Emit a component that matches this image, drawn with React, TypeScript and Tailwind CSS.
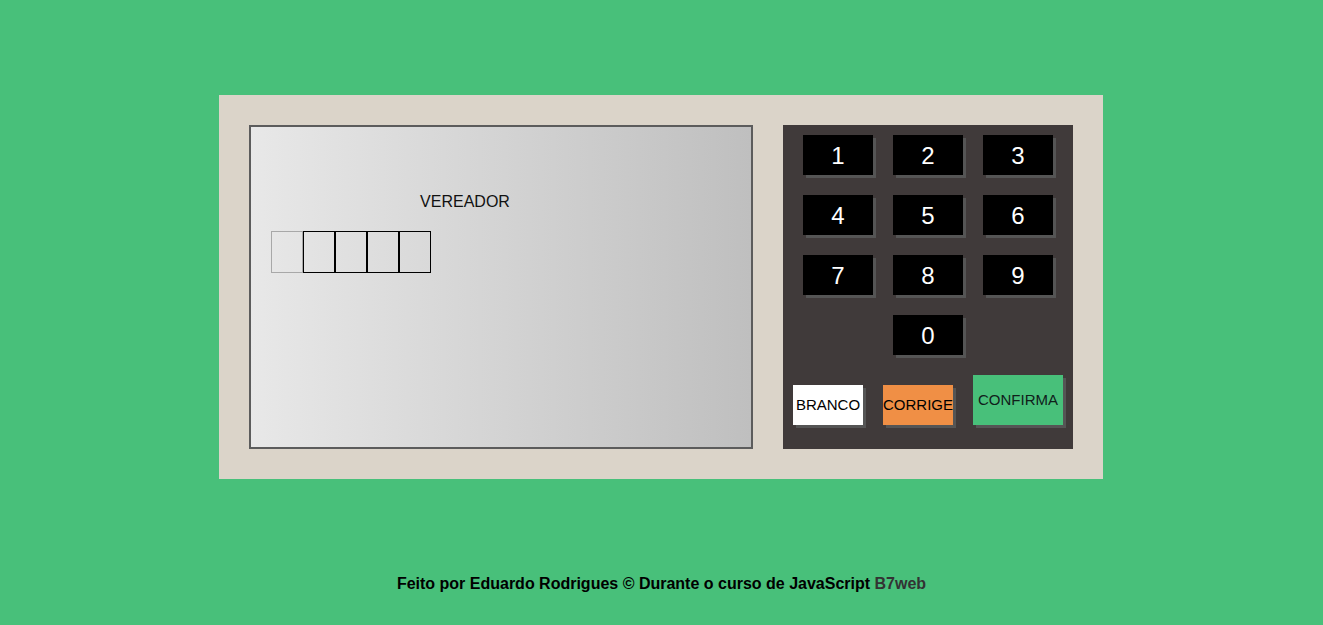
import React from "react";

const keys = ["1", "2", "3", "4", "5", "6", "7", "8", "9"];

function Key({ label }: { label: string }) {
  return (
    <div className="m-[10px] flex h-[40px] w-[70px] items-center justify-center bg-black pt-px text-[24px] text-white shadow-[3px_3px_0_#555555]">
      {label}
    </div>
  );
}

export default function App() {
  return (
    <div className="min-h-[625px] bg-[#48c07a] pt-[95px] font-['Liberation_Sans',Arial,sans-serif]">
      <div className="ml-[219px] flex w-[884px] gap-[30px] bg-[#dbd4c9] p-[30px]">
        {/* Screen */}
        <div className="h-[324px] w-[504px] border-2 border-[#5c5c5c] bg-linear-to-r from-[#e8e8e8] to-[#bfbfbf] p-[20px]">
          <div className="w-[388px]">
            <div className="mt-[46px] text-center text-[16px] leading-[18px] text-[#111]">VEREADOR</div>
            <div className="mt-[20px] flex">
              <div className="h-[42px] w-[32px] border border-[#a8a8a8]" />
              <div className="h-[42px] w-[32px] border border-black" />
              <div className="h-[42px] w-[32px] border border-black" />
              <div className="h-[42px] w-[32px] border border-black" />
              <div className="h-[42px] w-[32px] border border-black" />
            </div>
          </div>
        </div>

        {/* Keypad */}
        <div className="h-[324px] w-[290px] bg-[#403a3a] px-[10px]">
          <div className="flex flex-wrap">
            {keys.map((k) => (
              <Key key={k} label={k} />
            ))}
          </div>
          <div className="flex justify-center">
            <Key label="0" />
          </div>
          <div className="mt-[10px] flex items-end gap-[20px]">
            <div className="flex h-[40px] w-[70px] items-center justify-center bg-white text-[15px] text-black shadow-[3px_3px_0_#555555]">
              BRANCO
            </div>
            <div className="flex h-[40px] w-[70px] items-center justify-center bg-[#f08f45] text-[15px] text-black shadow-[3px_3px_0_#555555]">
              CORRIGE
            </div>
            <div className="flex h-[50px] w-[90px] items-center justify-center bg-[#48c07a] text-[15px] text-[#10201a] shadow-[3px_3px_0_#555555]">
              CONFIRMA
            </div>
          </div>
        </div>
      </div>

      <div className="mt-[96px] text-center text-[16px] font-bold leading-[18px] text-black">
        Feito por Eduardo Rodrigues © Durante o curso de JavaScript <span className="text-[#333333]">B7web</span>
      </div>
    </div>
  );
}
